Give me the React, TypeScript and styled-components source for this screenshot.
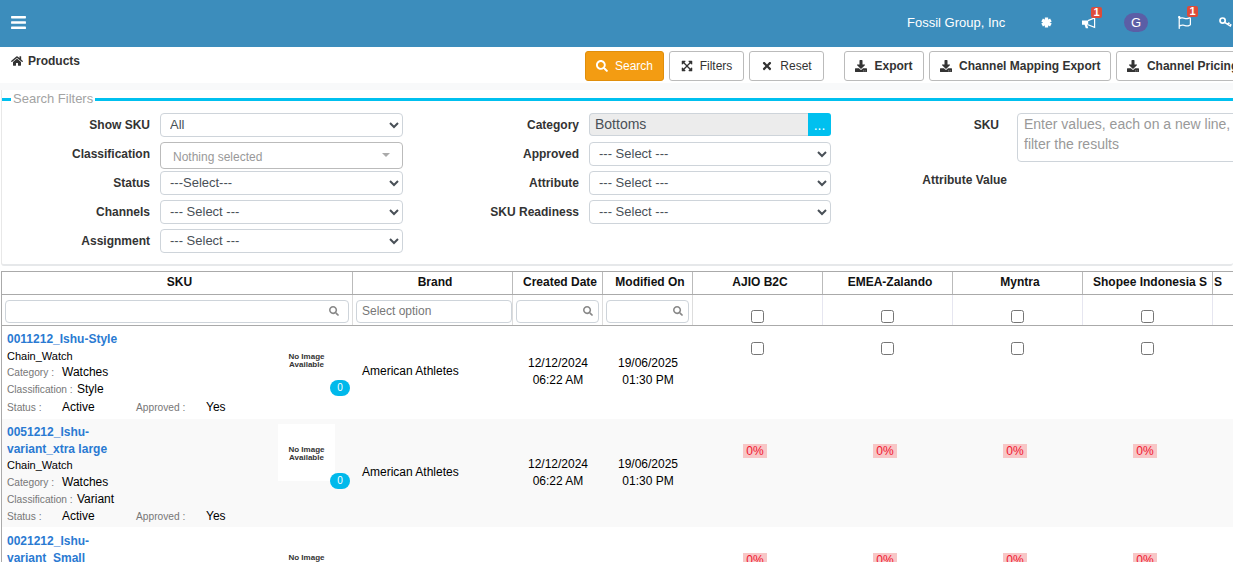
import React from "react";
import styled, { createGlobalStyle } from "styled-components";
import {
  FaBars, FaHome, FaRegFlag, FaSearch,
  FaExpandArrowsAlt, FaTimes, FaDownload,
} from "react-icons/fa";

const Global = createGlobalStyle`
  html, body { margin: 0; padding: 0; height: 100%; overflow: hidden; background: #fff; }
  body { font-family: "Liberation Sans", Arial, sans-serif; font-size: 12px; color: #333; }
  * { box-sizing: border-box; }
`;

const Page = styled.div`
  width: 1233px;
  height: 562px;
  overflow: hidden;
`;

const TopBar = styled.header`
  height: 47px;
  background: #3c8dbc;
  color: #fff;
  display: flex;
  align-items: center;
  padding: 0 0 2px 10px;
  white-space: nowrap;
`;

const Menu = styled.span`
  display: flex;
  font-size: 17px;
  flex: 0 0 897px;
`;

const Company = styled.span`
  font-size: 13px;
  flex: 0 0 134px;
`;

const TopIcon = styled.span<{ $w: number; $size?: number }>`
  position: relative;
  display: flex;
  flex: 0 0 ${(p) => p.$w}px;
  font-size: ${(p) => p.$size ?? 13}px;
`;

const Count = styled.b`
  position: absolute;
  left: 9px;
  top: -10px;
  width: 11px;
  height: 11px;
  border-radius: 2px;
  background: #dd4b39;
  color: #fff;
  font-size: 11px;
  line-height: 11px;
  text-align: center;
`;

const Avatar = styled.span`
  flex: 0 0 24px;
  height: 19px;
  margin-right: 30px;
  border-radius: 10px;
  background: #5b5ea6;
  font-size: 13px;
  line-height: 19px;
  text-align: center;
`;

const ToolBar = styled.div`
  height: 36px;
  display: flex;
  align-items: flex-start;
  padding: 4px 0 0 11px;
  white-space: nowrap;
`;

const Crumb = styled.div`
  flex: 0 0 574px;
  display: flex;
  align-items: center;
  gap: 5px;
  height: 20px;
  font-weight: 700;
  color: #333;
  font-size: 12px;
  svg { font-size: 12px; }
`;

const Button = styled.button<{ $primary?: boolean; $strong?: boolean; $gapLeft?: number }>`
  flex: none;
  height: 30px;
  min-width: 75px;
  margin-left: ${(p) => p.$gapLeft ?? 5}px;
  padding: 0 10px;
  display: inline-flex;
  align-items: center;
  justify-content: center;
  gap: ${(p) => (p.$strong ? 7.5 : 7)}px;
  border-radius: 3px;
  border: 1px solid ${(p) => (p.$primary ? "#e08e0b" : "#bbb")};
  background: ${(p) => (p.$primary ? "#f39c12" : "#fff")};
  color: ${(p) => (p.$primary ? "#fff" : "#333")};
  font: ${(p) => (p.$strong ? 700 : 400)} 12px "Liberation Sans", Arial, sans-serif;
  svg { font-size: 12px; flex: none; }
`;

const Strip = styled.div`
  height: 7px;
  background: #f8f9fa;
`;

const Panel = styled.section`
  margin-left: 1px;
  height: 176px;
  border-left: 1px solid #e8e8e8;
  border-bottom: 2px solid #e6e8ea;
  border-radius: 0 0 3px 3px;
  padding-top: 2px;
`;

const Legend = styled.div`
  display: flex;
  align-items: center;
  height: 14px;
  gap: 2px;
  font-size: 13px;
  color: #a3a3a3;
  line-height: 14px;
`;

const LegendLine = styled.i<{ $w?: number }>`
  height: 3px;
  background: #00c0ef;
  flex: ${(p) => (p.$w ? `0 0 ${p.$w}px` : "1")};
`;

const FilterGrid = styled.div`
  display: grid;
  grid-template-columns: 401px 428px 1fr;
  margin-top: 7px;
`;

const FieldColumn = styled.div<{ $label: number; $control: number }>`
  display: grid;
  grid-template-columns: ${(p) => p.$label}px ${(p) => p.$control}px;
  column-gap: 10px;
  grid-auto-rows: 29px;
  align-items: start;
`;

const FreeColumn = styled.div`
  display: flex;
  flex-direction: column;
  align-items: flex-start;
`;

const Label = styled.label<{ $pad?: number; $w?: number; $drop?: number }>`
  height: 24px;
  width: ${(p) => (p.$w ? `${p.$w}px` : "auto")};
  margin-top: ${(p) => p.$drop ?? 0}px;
  line-height: 25px;
  text-align: right;
  font-weight: 700;
  color: #333;
  white-space: nowrap;
  padding-right: ${(p) => p.$pad ?? 0}px;
`;

const Select = styled.select`
  width: 100%;
  height: 24px;
  padding: 0 0 2px 5px;
  border: 1px solid #ced4da;
  border-radius: 4px;
  background: #fff;
  color: #495057;
  font: 13px "Liberation Sans", Arial, sans-serif;
  outline: none;
`;

const Picker = styled.div`
  height: 27px;
  padding: 2px 12px 0;
  display: flex;
  align-items: center;
  justify-content: space-between;
  border: 1px solid #bbb;
  border-radius: 4px;
  color: #999;
  font-size: 12px;
`;

const Caret = styled.i`
  width: 0;
  height: 0;
  margin-top: -3px;
  border-left: 4px solid transparent;
  border-right: 4px solid transparent;
  border-top: 4px solid #aaa;
`;

const Group = styled.div`
  display: flex;
  height: 23px;
`;

const ReadOnly = styled.div`
  flex: 1;
  background: #ececec;
  border: 1px solid #ced4da;
  border-right: 0;
  border-radius: 4px 0 0 4px;
  padding-left: 5px;
  font-size: 14px;
  line-height: 20px;
  color: #495057;
`;

const DotsButton = styled.span`
  flex: 0 0 23px;
  background: #00c0ef;
  color: #fff;
  border-radius: 0 3px 3px 0;
  text-align: center;
  font-size: 14px;
  line-height: 24px;
`;

const SkuArea = styled.textarea`
  width: 300px;
  height: 49px;
  padding: 0 6px;
  border: 1px solid #ced4da;
  border-radius: 4px;
  resize: none;
  outline: none;
  overflow: hidden;
  font: 14px/20px "Liberation Sans", Arial, sans-serif;
  &::placeholder { color: #999; opacity: 1; }
`;

const SkuRow = styled.div`
  display: grid;
  grid-template-columns: 176px 300px;
  column-gap: 10px;
  height: 54px;
`;

const Table = styled.div`
  margin: 5px 0 0 1px;
  width: 1300px;
  border-top: 1px solid #aaa;
  border-left: 1px solid #aaa;
`;

const Row = styled.div<{ $striped?: boolean; $h: number; $line?: boolean }>`
  display: grid;
  grid-template-columns: 351px 160px 90px 90px 130px 130px 130px 130px 130px;
  height: ${(p) => p.$h}px;
  background: ${(p) => (p.$striped ? "#f9f9f9" : "#fff")};
  border-bottom: ${(p) => (p.$line ? "1px solid #aaa" : "0")};
`;

const HeadCell = styled.div<{ $start?: boolean }>`
  border-right: 1px solid #bbb;
  font-weight: 700;
  color: #111;
  line-height: 21px;
  padding-left: ${(p) => (p.$start ? 1 : 5)}px;
  text-align: ${(p) => (p.$start ? "left" : "center")};
  white-space: nowrap;
  overflow: hidden;
`;

const FilterCell = styled.div<{ $center?: boolean; $flush?: boolean }>`
  position: relative;
  border-right: 1px solid ${(p) => (p.$center ? "#e6e6f0" : "#ddd")};
  padding: 5px ${(p) => (p.$flush ? 0 : 3)}px 0 3px;
  text-align: ${(p) => (p.$center ? "center" : "left")};
`;

const FilterInput = styled.input`
  width: 100%;
  height: 23px;
  padding: 0 5px 2px;
  border: 1px solid #ced4da;
  border-radius: 4px;
  outline: none;
  font: 12px "Liberation Sans", Arial, sans-serif;
  &::placeholder { color: #777; opacity: 1; }
`;

const InputIcon = styled.span<{ $right?: number }>`
  position: absolute;
  right: ${(p) => p.$right ?? 9}px;
  top: 11px;
  display: flex;
  color: #888;
  font-size: 10px;
`;

const Check = styled.input.attrs({ type: "checkbox" })`
  width: 13px;
  height: 13px;
  margin: 0;
  display: inline-block;
  vertical-align: top;
`;

const FilterCheck = styled(Check)`
  margin-top: 10px;
`;

const ProductCell = styled.div`
  display: flex;
  justify-content: space-between;
  padding: 5px 18px 0 5px;
`;

const Info = styled.div<{ $shift?: boolean }>`
  width: 250px;
  padding-top: ${(p) => (p.$shift ? 1 : 0)}px;
`;

const ProductLink = styled.a`
  display: block;
  width: 118px;
  color: #2a7ad2;
  font-weight: 700;
  font-size: 12px;
  line-height: 16.5px;
  white-space: pre-line;
`;

const Sub = styled.div<{ $tall?: boolean }>`
  height: ${(p) => (p.$tall ? 17 : 16)}px;
  font-size: 11px;
  line-height: 17px;
  color: #000;
`;

const Meta = styled.div<{ $drop?: number }>`
  display: flex;
  align-items: baseline;
  height: 17px;
  margin-top: ${(p) => p.$drop ?? 0}px;
  line-height: 17px;
  font-size: 12px;
  color: #000;
`;

const MetaKey = styled.span<{ $w: number }>`
  flex: 0 0 ${(p) => p.$w}px;
  font-size: 10.2px;
  color: #777;
`;

const MetaValue = styled.span<{ $w?: number }>`
  flex: ${(p) => (p.$w ? `0 0 ${p.$w}px` : "none")};
`;

const Thumb = styled.div`
  position: relative;
  flex: 0 0 57px;
  height: 57px;
  background: #fff;
  padding-top: 21.5px;
  text-align: center;
  font-size: 8px;
  line-height: 8px;
  font-weight: 700;
  color: #333;
  white-space: pre-line;
`;

const Bubble = styled.span`
  position: absolute;
  right: -15px;
  bottom: -8px;
  width: 20px;
  height: 16px;
  border-radius: 8px;
  background: #00b9eb;
  color: #fff;
  font-size: 10px;
  font-weight: 400;
  line-height: 16px;
  text-align: center;
`;

const TextCell = styled.div`
  display: flex;
  align-items: center;
  justify-content: center;
  text-align: center;
  line-height: 17px;
  color: #000;
  white-space: pre-line;
  padding-bottom: 1px;
`;

const BrandCell = styled(TextCell)`
  justify-content: flex-start;
  padding-left: 9px;
  padding-bottom: 2px;
`;

const ChannelCell = styled.div<{ $top: number }>`
  padding: ${(p) => p.$top}px 1px 0 0;
  text-align: center;
`;

const Percent = styled.span`
  display: inline-block;
  height: 14px;
  padding: 0 3px;
  margin-right: 5px;
  background: #f8c6c6;
  color: #f01530;
  line-height: 14px;
`;

const StarIcon = () => (
  <svg width="11" height="11" viewBox="0 0 10 10" aria-hidden="true">
    <path d="M5 .4v9.2M1 2.7l8 4.6M9 2.7L1 7.3" stroke="currentColor" strokeWidth="3" fill="none" />
  </svg>
);

const HornIcon = () => (
  <svg width="14" height="12" viewBox="0 0 14 12" aria-hidden="true">
    <path d="M0 3.4h6.2v4.4H0zM2.6 7.8h2.6l1 3.4H3.8z" fill="currentColor" />
    <path d="M6 3.6l6.6-2.6v9.4L6 7.8" stroke="currentColor" strokeWidth="1.2" fill="none" />
  </svg>
);

const KeyIcon = () => (
  <svg width="13" height="11" viewBox="0 0 13 11" aria-hidden="true">
    <circle cx="3.6" cy="3.6" r="2.6" stroke="currentColor" strokeWidth="1.7" fill="none" />
    <path d="M5.6 5.4l6.4 4M9 7.2l1.4-1.6M11 8.6l1.2-1.4" stroke="currentColor" strokeWidth="1.7" fill="none" />
  </svg>
);

const channels = ["AJIO B2C", "EMEA-Zalando", "Myntra", "Shopee Indonesia S"];

type Product = {
  name: string; type: string; h: number; striped?: boolean;
  boxes?: boolean;
  brand?: boolean;
  shift?: boolean;
  tall?: boolean;
  top: number;
};

const products: Product[] = [
  { name: "0011212_Ishu-Style", type: "Style", h: 93, boxes: true, brand: true, top: 16 },
  { name: "0051212_Ishu-\nvariant_xtra large", type: "Variant", h: 108, striped: true, brand: true, tall: true, top: 25 },
  { name: "0021212_Ishu-\nvariant_Small", type: "Variant", h: 108, shift: true, tall: true, top: 26 },
];

export default function App() {
  return (
    <Page>
      <Global />
      <TopBar>
        <Menu><FaBars /></Menu>
        <Company>Fossil Group, Inc</Company>
        <TopIcon $w={41}><StarIcon /></TopIcon>
        <TopIcon $w={42}><HornIcon /><Count>1</Count></TopIcon>
        <Avatar>G</Avatar>
        <TopIcon $w={41}><FaRegFlag /><Count>1</Count></TopIcon>
        <TopIcon $w={14}><KeyIcon /></TopIcon>
      </TopBar>

      <ToolBar>
        <Crumb><FaHome />Products</Crumb>
        <Button $primary $gapLeft={0}><FaSearch />Search</Button>
        <Button><FaExpandArrowsAlt />Filters</Button>
        <Button><FaTimes />Reset</Button>
        <Button $strong $gapLeft={20}><FaDownload />Export</Button>
        <Button $strong><FaDownload />Channel Mapping Export</Button>
        <Button $strong><FaDownload />Channel Pricing Export</Button>
      </ToolBar>
      <Strip />

      <Panel>
        <Legend>
          <LegendLine $w={9} />
          Search Filters
          <LegendLine />
        </Legend>
        <FilterGrid>
          <FieldColumn $label={148} $control={243}>
            <Label>Show SKU</Label>
            <Select defaultValue="All"><option>All</option></Select>
            <Label>Classification</Label>
            <Picker>Nothing selected<Caret /></Picker>
            <Label>Status</Label>
            <Select><option>---Select---</option></Select>
            <Label>Channels</Label>
            <Select><option>--- Select ---</option></Select>
            <Label>Assignment</Label>
            <Select><option>--- Select ---</option></Select>
          </FieldColumn>
          <FieldColumn $label={176} $control={242}>
            <Label>Category</Label>
            <Group><ReadOnly>Bottoms</ReadOnly><DotsButton>...</DotsButton></Group>
            <Label>Approved</Label>
            <Select><option>--- Select ---</option></Select>
            <Label>Attribute</Label>
            <Select><option>--- Select ---</option></Select>
            <Label>SKU Readiness</Label>
            <Select><option>--- Select ---</option></Select>
          </FieldColumn>
          <FreeColumn>
            <SkuRow>
              <Label $pad={8}>SKU</Label>
              <SkuArea placeholder={"Enter values, each on a new line, to\nfilter the results"} />
            </SkuRow>
            <Label $w={176} $drop={1}>Attribute Value</Label>
          </FreeColumn>
        </FilterGrid>
      </Panel>

      <Table>
        <Row $h={23} $line>
          <HeadCell>SKU</HeadCell>
          <HeadCell>Brand</HeadCell>
          <HeadCell>Created Date</HeadCell>
          <HeadCell>Modified On</HeadCell>
          {channels.map((c) => <HeadCell key={c}>{c}</HeadCell>)}
          <HeadCell $start>S</HeadCell>
        </Row>
        <Row $h={31} $line>
          <FilterCell>
            <FilterInput aria-label="SKU filter" />
            <InputIcon $right={13}><FaSearch /></InputIcon>
          </FilterCell>
          <FilterCell $flush><FilterInput placeholder="Select option" /></FilterCell>
          <FilterCell>
            <FilterInput aria-label="Created filter" />
            <InputIcon><FaSearch /></InputIcon>
          </FilterCell>
          <FilterCell>
            <FilterInput aria-label="Modified filter" />
            <InputIcon><FaSearch /></InputIcon>
          </FilterCell>
          {channels.map((c) => <FilterCell key={c} $center><FilterCheck aria-label={c} /></FilterCell>)}
          <FilterCell $center />
        </Row>
        {products.map((p) => (
          <Row key={p.name} $h={p.h} $striped={p.striped}>
            <ProductCell>
              <Info $shift={p.shift}>
                <ProductLink>{p.name}</ProductLink>
                <Sub $tall={p.tall}>Chain_Watch</Sub>
                <Meta><MetaKey $w={55}>Category :</MetaKey><MetaValue>Watches</MetaValue></Meta>
                <Meta><MetaKey $w={70}>Classification :</MetaKey><MetaValue>{p.type}</MetaValue></Meta>
                <Meta $drop={p.tall ? 0 : 1}>
                  <MetaKey $w={55}>Status :</MetaKey><MetaValue $w={74}>Active</MetaValue>
                  <MetaKey $w={70}>Approved :</MetaKey><MetaValue>Yes</MetaValue>
                </Meta>
              </Info>
              <Thumb>
                {"No Image\nAvailable"}
                <Bubble>0</Bubble>
              </Thumb>
            </ProductCell>
            <BrandCell>{p.brand ? "American Athletes" : ""}</BrandCell>
            <TextCell>{p.brand ? "12/12/2024\n06:22 AM" : ""}</TextCell>
            <TextCell>{p.brand ? "19/06/2025\n01:30 PM" : ""}</TextCell>
            {channels.map((c) => (
              <ChannelCell key={c} $top={p.top}>
                {p.boxes ? <Check aria-label={c} /> : <Percent>0%</Percent>}
              </ChannelCell>
            ))}
          </Row>
        ))}
      </Table>
    </Page>
  );
}
